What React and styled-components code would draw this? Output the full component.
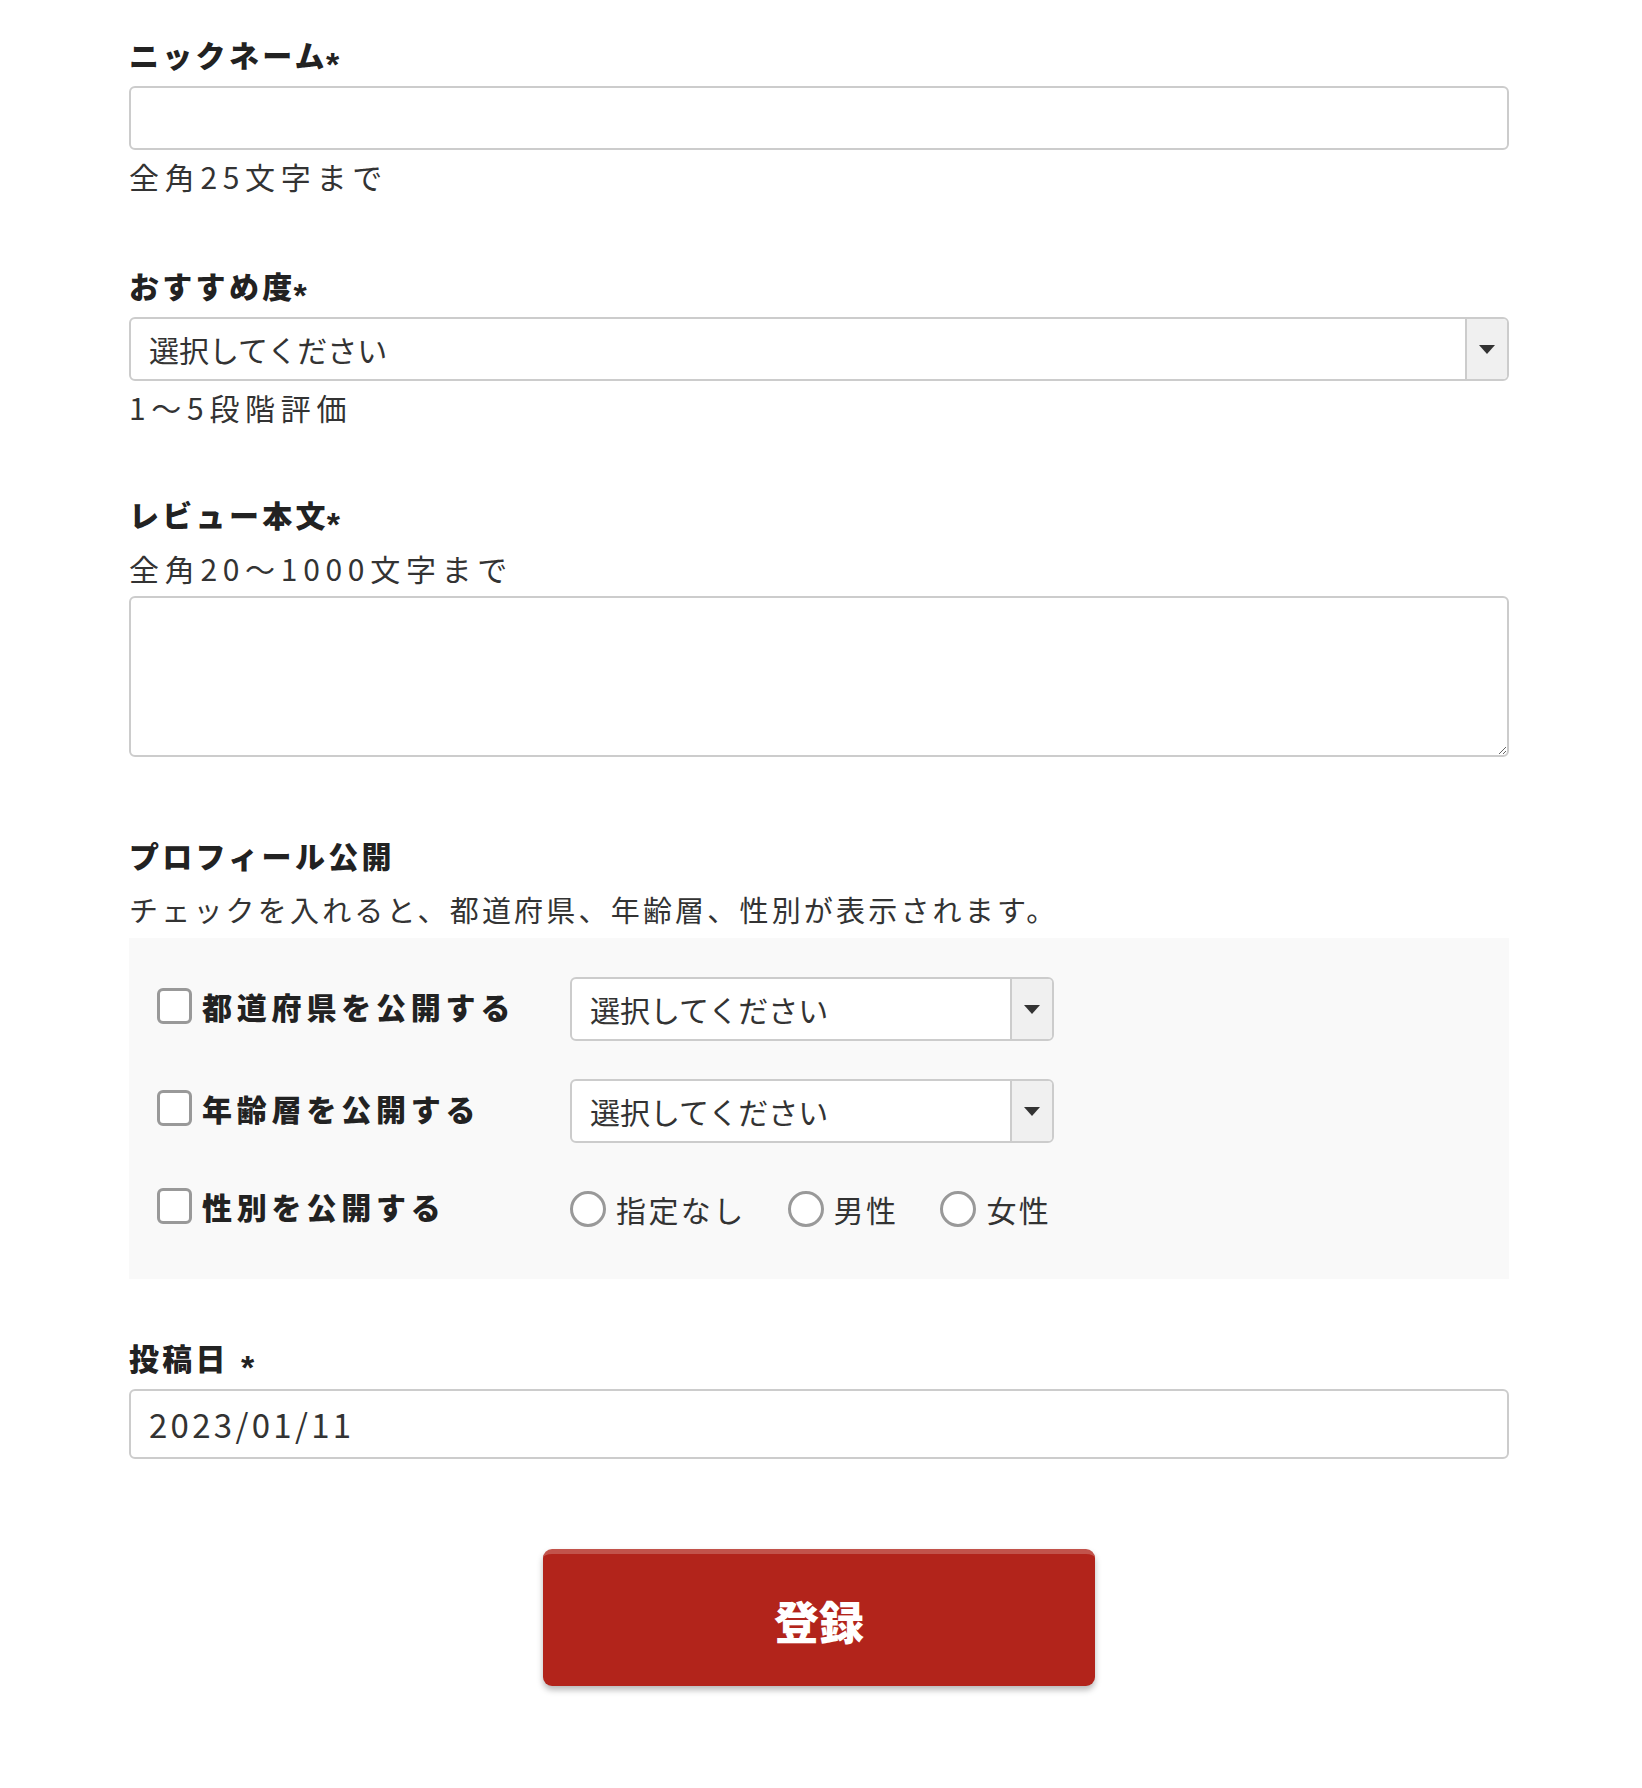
import React from 'react';
import styled, { createGlobalStyle } from 'styled-components';

const GlobalStyle = createGlobalStyle`
  html, body {
    margin: 0;
    padding: 0;
    background: #fff;
  }
  body {
    font-family: 'Noto Sans CJK JP', 'Noto Sans', sans-serif;
    color: #333;
  }
  * {
    box-sizing: border-box;
  }
`;

const Page = styled.form`
  width: 1380px;
  margin: 0 0 0 129px;
  padding: 32px 0 102px;
  display: flex;
  flex-direction: column;
`;

const Field = styled.div`
  display: flex;
  flex-direction: column;
  margin-bottom: ${(p) => p.$gap || 64}px;
`;

const Label = styled.label`
  display: block;
  height: 45px;
  font-size: 30px;
  line-height: 45px;
  font-weight: 900;
  color: #222;
  letter-spacing: 0.11em;
  margin-bottom: 9px;
`;

const Required = styled.span`
  font-family: 'Liberation Sans', Arial, sans-serif;
  font-size: 34px;
  line-height: 0;
  font-weight: 700;
  margin-left: ${(p) => (p.$spaced ? 12 : -2)}px;
  position: relative;
  top: 9px;
`;

const Help = styled.p`
  margin: ${(p) => (p.$before ? '0 0 5px' : '4px 0 0')};
  height: 45px;
  font-size: 30px;
  line-height: 45px;
  letter-spacing: 0.19em;
  color: #333;
`;

const TextInput = styled.input`
  width: 100%;
  height: ${(p) => p.$height || 64}px;
  border: 2px solid #ccc;
  border-radius: 6px;
  padding: 0 18px;
  font-family: 'Noto Sans CJK JP', 'Noto Sans', sans-serif;
  font-size: 33px;
  letter-spacing: 0.1em;
  color: #333;
  background: #fff;
  outline: none;
`;

const TextArea = styled.textarea`
  width: 100%;
  height: 161px;
  border: 2px solid #ccc;
  border-radius: 6px;
  padding: 12px 18px;
  font-family: 'Noto Sans CJK JP', 'Noto Sans', sans-serif;
  font-size: 30px;
  outline: none;
  resize: vertical;
  display: block;
`;

const SelectBox = styled.div`
  display: flex;
  width: ${(p) => p.$width || '100%'};
  height: 64px;
  border: 2px solid #ccc;
  border-radius: 6px;
  background: #fff;
  overflow: hidden;
`;

const NativeSelect = styled.select`
  flex: 1;
  appearance: none;
  border: none;
  background: transparent;
  padding: 0 18px;
  font-family: 'Noto Sans CJK JP', 'Noto Sans', sans-serif;
  font-size: 30px;
  color: #333;
  outline: none;
`;

const ArrowBox = styled.span`
  width: 42px;
  flex: none;
  background: #f0f0f0;
  border-left: 2px solid #ccc;
  display: flex;
  align-items: center;
  justify-content: center;
`;

const Section = styled.div`
  display: flex;
  flex-direction: column;
  margin-bottom: 56px;
`;

const Description = styled.p`
  margin: 0 0 6px;
  font-size: 29px;
  line-height: 45px;
  letter-spacing: 0.11em;
  color: #333;
`;

const Panel = styled.div`
  background: #f9f9f9;
  padding: 39px 28px 42px;
  display: flex;
  flex-direction: column;
  gap: 38px;
`;

const Row = styled.div`
  display: flex;
  align-items: center;
  height: ${(p) => (p.$compact ? 56 : 64)}px;
`;

const CheckLabel = styled.label`
  width: 413px;
  flex: none;
  display: flex;
  align-items: center;
  gap: 10px;
  padding-bottom: 6px;
  font-size: 30px;
  font-weight: 900;
  letter-spacing: 0.16em;
  color: #222;
`;

const CheckBox = styled.input.attrs({ type: 'checkbox' })`
  appearance: none;
  margin: 0;
  width: 35px;
  height: 36px;
  border: 3px solid #999;
  border-radius: 6px;
  background: #fff;
  flex: none;
`;

const RadioGroup = styled.div`
  display: flex;
  align-items: center;
  gap: 42px;
`;

const RadioLabel = styled.label`
  display: flex;
  align-items: center;
  gap: 10px;
  font-size: 30px;
  letter-spacing: 0.08em;
  color: #333;
`;

const Radio = styled.input.attrs({ type: 'radio' })`
  appearance: none;
  margin: 0;
  width: 36px;
  height: 36px;
  border: 3px solid #999;
  border-radius: 50%;
  background: #fff;
  flex: none;
`;

const SubmitButton = styled.button`
  align-self: center;
  width: 552px;
  height: 137px;
  margin-top: 32px;
  border: none;
  border-top: 5px solid #c2534b;
  border-radius: 9px;
  background: #b2241b;
  color: #fff;
  font-family: 'Noto Sans CJK JP', 'Noto Sans', sans-serif;
  font-size: 45px;
  font-weight: 900;
  box-shadow: 0 4px 6px rgba(0, 0, 0, 0.28);
  cursor: pointer;
`;

const Arrow = () => (
  <svg width="16" height="9" viewBox="0 0 16 9">
    <path d="M0 0 L16 0 L8 9 Z" fill="#333" />
  </svg>
);

const Select = ({ width }) => (
  <SelectBox $width={width}>
    <NativeSelect defaultValue="">
      <option value="">選択してください</option>
    </NativeSelect>
    <ArrowBox>
      <Arrow />
    </ArrowBox>
  </SelectBox>
);

const App = () => {
  return (
    <>
      <GlobalStyle />
      <Page onSubmit={(e) => e.preventDefault()}>
        <Field>
          <Label>ニックネーム<Required>*</Required></Label>
          <TextInput type="text" />
          <Help>全角25文字まで</Help>
        </Field>

        <Field $gap={62}>
          <Label>おすすめ度<Required>*</Required></Label>
          <Select />
          <Help>1〜5段階評価</Help>
        </Field>

        <Field $gap={76}>
          <Label>レビュー本文<Required>*</Required></Label>
          <Help $before>全角20〜1000文字まで</Help>
          <TextArea />
        </Field>

        <Section>
          <Label>プロフィール公開</Label>
          <Description>チェックを入れると、都道府県、年齢層、性別が表示されます。</Description>
          <Panel>
            <Row>
              <CheckLabel><CheckBox />都道府県を公開する</CheckLabel>
              <Select width="484px" />
            </Row>
            <Row>
              <CheckLabel><CheckBox />年齢層を公開する</CheckLabel>
              <Select width="484px" />
            </Row>
            <Row $compact>
              <CheckLabel><CheckBox />性別を公開する</CheckLabel>
              <RadioGroup>
                <RadioLabel><Radio name="gender" />指定なし</RadioLabel>
                <RadioLabel><Radio name="gender" />男性</RadioLabel>
                <RadioLabel><Radio name="gender" />女性</RadioLabel>
              </RadioGroup>
            </Row>
          </Panel>
        </Section>

        <Field $gap={58}>
          <Label>投稿日<Required $spaced>*</Required></Label>
          <TextInput type="text" defaultValue="2023/01/11" $height={70} />
        </Field>

        <SubmitButton type="submit">登録</SubmitButton>
      </Page>
    </>
  );
};

export default App;
